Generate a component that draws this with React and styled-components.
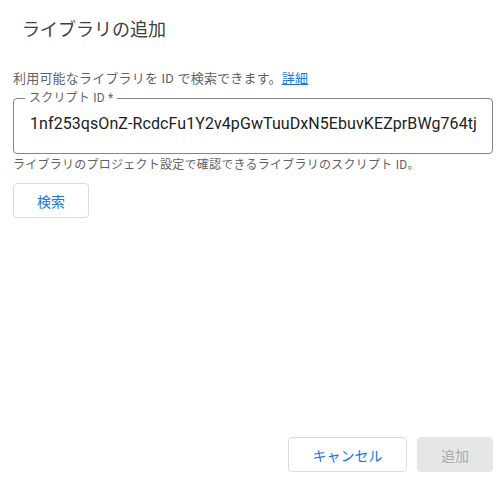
import React, { useState } from 'react'
import styled, { createGlobalStyle } from "styled-components";

const GlobalStyle = createGlobalStyle`
  html, body {
    margin: 0;
    padding: 0;
    background: #fff;
  }
  * {
    box-sizing: border-box;
  }
`

export default function App() {
  const [scriptId, setScriptId] = useState("1nf253qsOnZ-RcdcFu1Y2v4pGwTuuDxN5EbuvKEZprBWg764tj");

  return (
    <>
      <GlobalStyle />
      <Dialog>
        <Title>ライブラリの追加</Title>
        <Content>
          <Intro>
            利用可能なライブラリを ID で検索できます。<a href="#">詳細</a>
          </Intro>
          <Field>
            <legend>スクリプト ID&nbsp;*</legend>
            <input
              type="text"
              value={scriptId}
              onChange={(e) => setScriptId(e.target.value)}
            />
          </Field>
          <Hint>ライブラリのプロジェクト設定で確認できるライブラリのスクリプト ID。</Hint>
          <Button $width={76}>検索</Button>
        </Content>
        <Footer>
          <Button $width={119}>キャンセル</Button>
          <Button $width={76} $disabled disabled>追加</Button>
        </Footer>
      </Dialog>
    </>
  )
}

const Dialog = styled.div`
  width: 501px;
  height: 482px;
  padding: 18px 8px 10px 13px;
  display: flex;
  flex-direction: column;
  font-family: Roboto, "Noto Sans CJK JP", sans-serif;
  color: #3c4043;
`

const Title = styled.h2`
  margin: 0 0 0 9px;
  font-size: 18px;
  line-height: 24px;
  font-weight: 400;
  color: #3c4043;
`

const Content = styled.div`
  flex: 1;
  display: flex;
  flex-direction: column;
  align-items: flex-start;
  padding-top: 28px;
`

const Intro = styled.p`
  margin: 0;
  font-size: 13px;
  line-height: 18px;
  letter-spacing: 0.2px;
  color: #5f6368;

  a {
    color: #1a73e8;
    text-decoration: underline;
  }
`

const Field = styled.fieldset`
  margin: 4px 0 0 0;
  width: 480px;
  height: 62px;
  padding: 0 0 0 16px;
  border: 1px solid #80868b;
  border-radius: 4px;

  legend {
    margin-left: -5px;
    padding: 0 4px;
    font-size: 12px;
    line-height: 12px;
    letter-spacing: 0.2px;
    color: #5f6368;
  }

  input {
    width: 100%;
    border: none;
    outline: none;
    padding: 8px 0 0 0;
    font-family: Roboto, sans-serif;
    font-size: 16px;
    line-height: 24px;
    letter-spacing: 0.08px;
    color: #202124;
    background: transparent;
  }
`

const Hint = styled.p`
  margin: 3px 0 0 0;
  font-size: 12px;
  line-height: 16px;
  letter-spacing: 0.25px;
  color: #5f6368;
`

const Button = styled.button`
  width: ${(p) => p.$width}px;
  height: 35px;
  border-radius: 4px;
  border: 1px solid ${(p) => (p.$disabled ? "#e5e6e6" : "#dadce0")};
  background: ${(p) => (p.$disabled ? "#e5e6e6" : "#fff")};
  color: ${(p) => (p.$disabled ? "#a9abad" : "#1a73e8")};
  font-family: Roboto, "Noto Sans CJK JP", sans-serif;
  font-size: 14px;
  cursor: pointer;
  margin-top: 10px;
`

const Footer = styled.div`
  display: flex;
  justify-content: flex-end;
  gap: 10px;

  ${Button} {
    margin-top: 0;
  }
`
